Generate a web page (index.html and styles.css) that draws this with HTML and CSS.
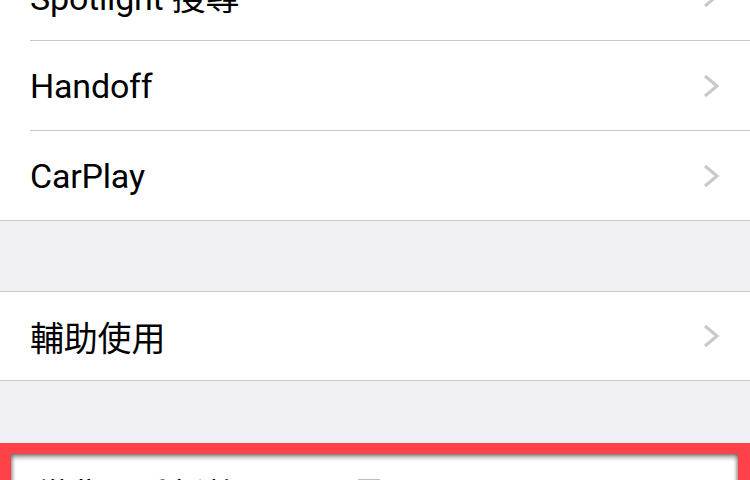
FILE: index.html
```html
<!DOCTYPE html>
<html lang="zh-Hant">
<head>
    <meta charset="UTF-8">
    <meta name="viewport" content="width=device-width, initial-scale=1.0">
    <title>一般</title>
    <link rel="stylesheet" href="styles.css">
</head>
<body>
    <div class="page">
        <ul class="group first">
            <li class="row">
                <span class="label">Spotlight 搜尋</span>
                <svg class="chevron" viewBox="0 0 17 24"><polyline points="2,2 14,12 2,22"/></svg>
            </li>
            <li class="row">
                <span class="label">Handoff</span>
                <svg class="chevron" viewBox="0 0 17 24"><polyline points="2,2 14,12 2,22"/></svg>
            </li>
            <li class="row">
                <span class="label">CarPlay</span>
                <svg class="chevron" viewBox="0 0 17 24"><polyline points="2,2 14,12 2,22"/></svg>
            </li>
        </ul>

        <div class="gap"></div>

        <ul class="group">
            <li class="row">
                <span class="label">輔助使用</span>
                <svg class="chevron" viewBox="0 0 17 24"><polyline points="2,2 14,12 2,22"/></svg>
            </li>
        </ul>

        <div class="gap small"></div>

        <div class="highlight">
            <div class="highlight-inner">
                <span class="label">從背景重新整理 App</span>
                <span class="key"></span>
            </div>
        </div>
    </div>
</body>
</html>
```

FILE: styles.css
```css
body {
    margin: 0;
    height: 480px;
    overflow: hidden;
    background-color: #efeff4;
    font-family: Roboto, "Noto Sans CJK TC", sans-serif;
    color: #000;
}
.page {
    margin-top: -49px;
}
.group {
    list-style: none;
    margin: 0;
    padding: 0 0 0 30px;
    background-color: #fff;
    border-top: 1px solid #c8c7cc;
    border-bottom: 1px solid #c8c7cc;
}
.group.first {
    border-top: none;
}
.row {
    display: flex;
    align-items: center;
    justify-content: space-between;
    height: 89px;
    padding-right: 30px;
    border-bottom: 1px solid #c8c7cc;
}
.row:last-child {
    border-bottom: none;
    height: 88px;
}
.group.first .row:last-child {
    height: 89px;
}
.label {
    font-size: 34px;
    letter-spacing: -0.2px;
}
.chevron {
    width: 17px;
    height: 24px;
    fill: none;
    stroke: #c7c7cc;
    stroke-width: 3;
}
.gap {
    height: 70px;
}
.gap.small {
    height: 62px;
}
.highlight {
    background-color: #fe4248;
    padding: 11px 12px 0 11px;
}
.highlight-inner {
    display: flex;
    align-items: flex-start;
    height: 120px;
    padding: 23px 0 0 24px;
    background-color: #fff;
    box-shadow: inset 0 3px 5px rgba(0, 0, 0, 0.45), inset 2px 0 3px rgba(0, 0, 0, 0.2), inset -2px 0 3px rgba(0, 0, 0, 0.2);
}
.highlight-inner .label {
    line-height: 1;
    margin-top: 2px;
}
.key {
    width: 22px;
    height: 30px;
    margin-top: 2px;
    margin-left: 18px;
    background-color: #c0c0c4;
}
```
